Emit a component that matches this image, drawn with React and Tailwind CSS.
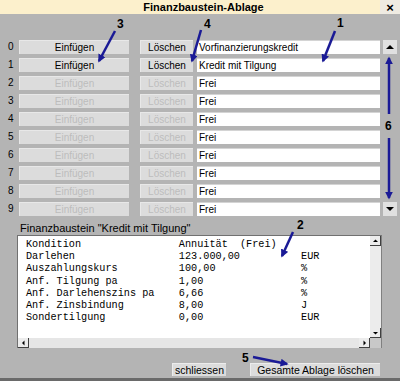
import React from 'react';

const slots = [
  'Vorfinanzierungskredit',
  'Kredit mit Tilgung',
  'Frei', 'Frei', 'Frei', 'Frei', 'Frei', 'Frei', 'Frei', 'Frei',
];

const details = [
  ['Kondition', 'Annuität  (Frei)', ''],
  ['Darlehen', '123.000,00', 'EUR'],
  ['Auszahlungskurs', '100,00', '%'],
  ['Anf. Tilgung pa', '1,00', '%'],
  ['Anf. Darlehenszins pa', '6,66', '%'],
  ['Anf. Zinsbindung', '8,00', 'J'],
  ['Sondertilgung', '0,00', 'EUR'],
];

const Arrow = ({ up }) => (
  <svg width="14" height="14" viewBox="0 0 14 14">
    {up ? <polygon points="3,9 11,9 7,5" fill="#000" /> : <polygon points="3,5 11,5 7,9" fill="#000" />}
  </svg>
);

const MiniBtn = ({ dir }) => (
  <div className="w-[11px] h-[10px] bg-[#ececec] border-r border-b border-[#404040] flex items-center justify-center">
    <svg width="7" height="6" viewBox="0 0 7 6">
      {dir === 'up' && <polygon points="1,4 6,4 3.5,1.5" fill="#000" />}
      {dir === 'down' && <polygon points="1,2 6,2 3.5,4.5" fill="#000" />}
      {dir === 'left' && <polygon points="4.5,0.5 4.5,5.5 2,3" fill="#000" />}
      {dir === 'right' && <polygon points="2.5,0.5 2.5,5.5 5,3" fill="#000" />}
    </svg>
  </div>
);

const SlotRow = ({ index, name }) => {
  const active = index < 2;
  return (
    <div className="flex h-[14px] items-stretch">
      <div className="w-[19px] pl-[8px] text-[10px] leading-[14px] text-black">{index}</div>
      <button
        className={`w-[110px] bg-[#dcdcdc] border-t border-l border-[#e8e8e8] text-[10px] leading-[12px] ${active ? 'text-black' : 'text-[#bcbcbc]'}`}
      >
        Einfügen
      </button>
      <button
        className={`ml-[11px] w-[53px] bg-[#dcdcdc] border-t border-l border-[#e8e8e8] text-[10px] leading-[12px] ${active ? 'text-black' : 'text-[#bcbcbc]'}`}
      >
        Löschen
      </button>
      <div className="ml-[4px] w-[183px] bg-white border-t border-[#d4d4d4] pl-[2px] text-[10px] leading-[13px] text-black">
        {name}
      </div>
      <div className="ml-[3px] w-[14px]">
        {index === 0 && (
          <div className="h-[14px] bg-[#e0e0e0] flex items-center justify-center"><Arrow up /></div>
        )}
        {index === 9 && (
          <div className="h-[14px] bg-[#e0e0e0] flex items-center justify-center"><Arrow /></div>
        )}
      </div>
    </div>
  );
};

export default function App() {
  const text = details
    .map(([k, v, u]) => (k.padEnd(25) + v.padEnd(20) + u).trimEnd())
    .join('\n');

  return (
    <div className="relative w-[400px] h-[381px] overflow-hidden bg-[#b4b4b4] font-['Liberation_Sans',Arial,sans-serif] flex flex-col">
      {/* title bar */}
      <div className="flex h-[14px] shrink-0">
        <div className="flex-1 bg-[#fcf0cc] flex items-center justify-center pl-[27px] text-[11px] font-bold text-black leading-none">
          Finanzbaustein-Ablage
        </div>
        <div className="w-[20px] bg-[#efebe2] flex items-center justify-center text-[13px] font-bold leading-none text-black">
          ×
        </div>
      </div>

      {/* slots */}
      <div className="mt-[26px] flex flex-col gap-[4px]">
        {slots.map((s, i) => (
          <SlotRow key={i} index={i} name={s} />
        ))}
      </div>

      <div className="mt-[6px] pl-[20px] text-[11px] leading-[12px] text-black">
        Finanzbaustein "Kredit mit Tilgung"
      </div>

      {/* details box */}
      <div className="mt-[1px] ml-[17px] w-[365px] h-[113px] border-t border-l border-[#707070] border-r border-r-[#808080] flex flex-col">
        <div className="flex flex-1 min-h-0">
          <div className="flex-1 bg-white pl-[8px] pt-[3px]">
            <pre className="font-['Liberation_Mono','Courier_New',monospace] text-[10.2px] leading-[12.2px] text-black whitespace-pre">
              {text}
            </pre>
          </div>
          <div className="w-[11px] bg-[#ececec] flex flex-col justify-between">
            <MiniBtn dir="up" />
            <MiniBtn dir="down" />
          </div>
        </div>
        <div className="flex h-[10px]">
          <div className="flex-1 bg-[#e6e6e6] flex justify-between">
            <MiniBtn dir="left" />
            <MiniBtn dir="right" />
          </div>
          <div className="w-[11px] bg-[#c8c8c8]" />
        </div>
      </div>

      {/* bottom buttons */}
      <div className="mt-[15px] flex h-[13px]">
        <button className="ml-[172px] w-[54px] bg-[#dcdcdc] border-t border-l border-[#ececec] text-[10.5px] leading-[12px] text-black">
          schliessen
        </button>
        <button className="ml-[24px] w-[130px] bg-[#dcdcdc] border-t border-l border-[#ececec] text-[10.5px] leading-[12px] text-black">
          Gesamte Ablage löschen
        </button>
      </div>
      <div className="mt-auto h-[3px] bg-[#6a6a6a]" />

      {/* annotations */}
      <svg className="absolute inset-0 pointer-events-none" width="400" height="381" viewBox="0 0 400 381">
        <defs>
          <marker id="ah" viewBox="0 0 10 10" refX="8" refY="5" markerWidth="3.2" markerHeight="3.2" orient="auto">
            <polygon points="0,0 10,5 0,10" fill="#1a1a96" />
          </marker>
        </defs>
        <g stroke="#1a1a96" strokeWidth="2.5" fill="none" markerEnd="url(#ah)">
          <line x1="115" y1="31" x2="99" y2="61" />
          <line x1="201" y1="30" x2="192" y2="61" />
          <line x1="335" y1="31" x2="323" y2="61" />
          <line x1="293" y1="232" x2="282" y2="256" />
          <line x1="253" y1="357" x2="287" y2="364" />
          <line x1="389" y1="114" x2="389" y2="58" />
          <line x1="389" y1="138" x2="389" y2="198" />
        </g>
      </svg>
      <span className="absolute left-[117px] top-[18px] text-[12px] font-bold leading-none text-black">3</span>
      <span className="absolute left-[204px] top-[18px] text-[12px] font-bold leading-none text-black">4</span>
      <span className="absolute left-[337px] top-[17px] text-[12px] font-bold leading-none text-black">1</span>
      <span className="absolute left-[297px] top-[219px] text-[12px] font-bold leading-none text-black">2</span>
      <span className="absolute left-[242px] top-[352px] text-[12px] font-bold leading-none text-black">5</span>
      <span className="absolute left-[385px] top-[120px] text-[12px] font-bold leading-none text-black">6</span>
    </div>
  );
}
